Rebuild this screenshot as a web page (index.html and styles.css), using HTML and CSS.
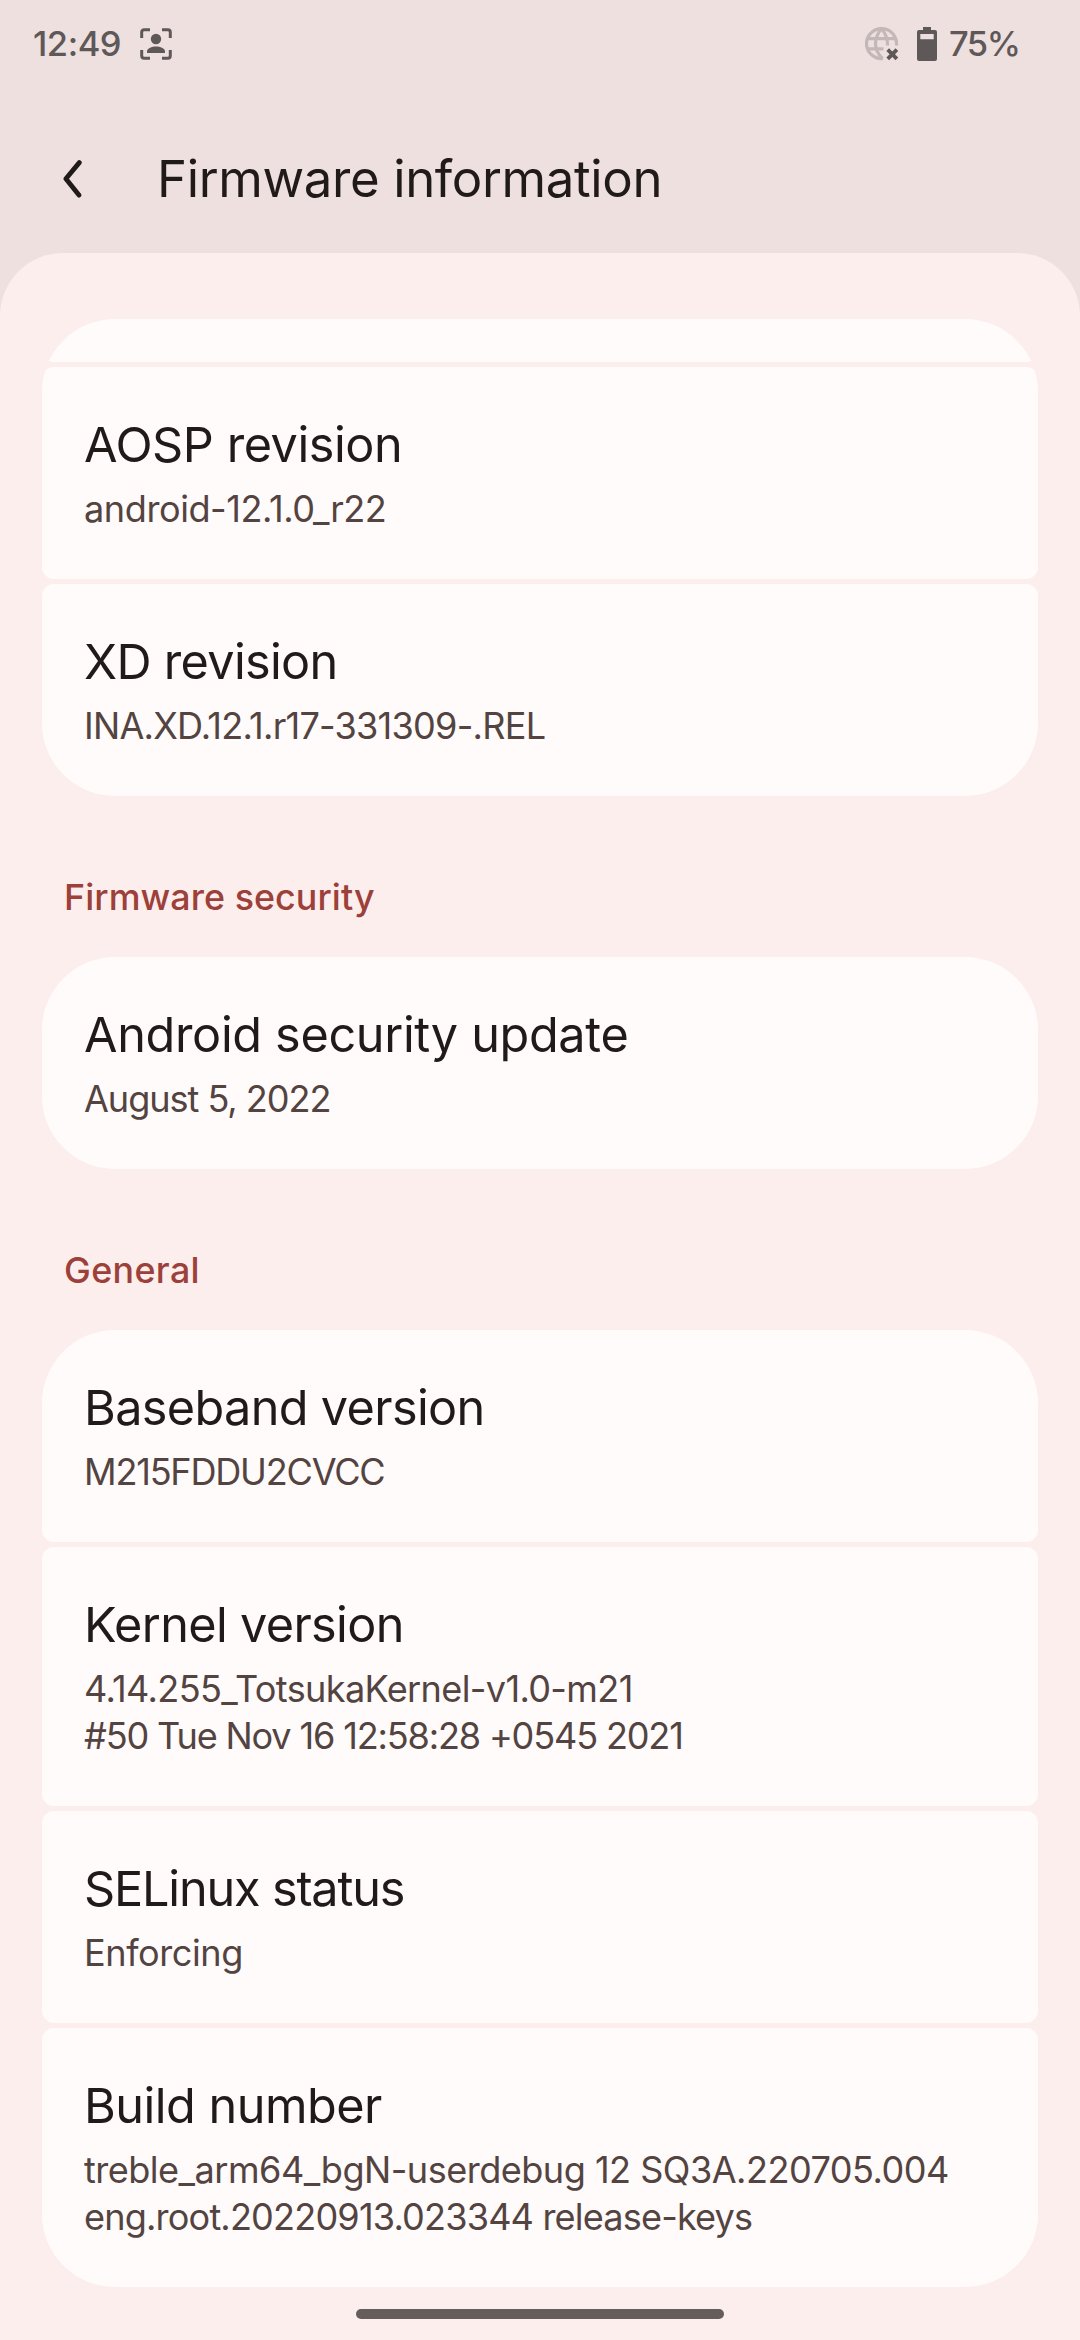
FILE: index.html
```html
<!DOCTYPE html>
<html lang="en">
<head>
<meta charset="utf-8">
<title>Firmware information</title>
<link rel="stylesheet" href="styles.css">
</head>
<body>
<div class="screen">
  <header class="status-bar">
    <div class="status-left">
      <span class="clock">12:49</span>
      <svg class="icon-person" viewBox="0 0 32 32" width="32" height="32">
        <path d="M1.7 10V4.2a2.5 2.5 0 0 1 2.5-2.5H10M22 1.7h5.8a2.5 2.5 0 0 1 2.500 2.500V10M30.300 22v5.800a2.500 2.500 0 0 1-2.500 2.500H22M10 30.300H4.200a2.500 2.500 0 0 1-2.500-2.500V22" fill="none" stroke="currentColor" stroke-width="3"/>
        <circle cx="16" cy="11" r="5.200" fill="currentColor"/>
        <path d="M7 25v-1.500c0-3.300 5-5 9-5s9 1.700 9 5V25z" fill="currentColor"/>
      </svg>
    </div>
    <div class="status-right">
      <svg class="icon-globe" viewBox="0 0 34 34" width="34" height="34">
        <g class="globe-lines" fill="none" stroke-width="3.200">
          <path d="M18 31.500A15 15 0 1 1 31.400 18.500"/>
          <path d="M3 11.700h27.500M3 21.800h15.500"/>
          <path d="M16.500 1.500c-3.400 4.200-6 9.300-6 15s2.600 10.800 7 15M16.500 1.500c3.400 4.200 6 9.300 6 15v2"/>
        </g>
        <path d="M22.700 22.700l9.200 9.200M31.900 22.700l-9.200 9.200" fill="none" stroke="currentColor" stroke-width="3.800"/>
      </svg>
      <svg class="icon-battery" viewBox="0 0 20 34" width="20" height="34">
        <path fill="currentColor" fill-rule="evenodd" d="M6 0h8v3h4a2 2 0 0 1 2 2v27a2 2 0 0 1-2 2H2a2 2 0 0 1-2-2V5a2 2 0 0 1 2-2h4zM3.300 7v5.200h13.400V7z"/>
      </svg>
      <span class="battery-level">75%</span>
    </div>
  </header>

  <div class="app-bar">
    <svg class="icon-back" viewBox="0 0 20 38" width="20" height="38">
      <path d="M16.300 2.600L2.900 18.800l13 16.300" fill="none" stroke="currentColor" stroke-width="4.800" stroke-linecap="round" stroke-linejoin="round"/>
    </svg>
    <h1 class="app-title">Firmware information</h1>
  </div>

  <main class="sheet">
    <section class="group">
      <div class="card card-scrolled"></div>
      <div class="card">
        <h3 class="title">AOSP revision</h3>
        <p class="summary">android-12.1.0_r22</p>
      </div>
      <div class="card">
        <h3 class="title title-snug">XD revision</h3>
        <p class="summary summary-xd">INA.XD.12.1.r17-331309-.REL</p>
      </div>
    </section>

    <h2 class="section-label">Firmware security</h2>
    <section class="group">
      <div class="card">
        <h3 class="title title-security">Android security update</h3>
        <p class="summary summary-date">August 5, 2022</p>
      </div>
    </section>

    <h2 class="section-label section-general">General</h2>
    <section class="group">
      <div class="card">
        <h3 class="title title-version">Baseband version</h3>
        <p class="summary summary-baseband">M215FDDU2CVCC</p>
      </div>
      <div class="card">
        <h3 class="title title-version">Kernel version</h3>
        <p class="summary summary-kernel">4.14.255_TotsukaKernel-v1.0-m21</p>
        <p class="summary summary-kernel-date">#50 Tue Nov 16 12:58:28 +0545 2021</p>
      </div>
      <div class="card">
        <h3 class="title title-selinux">SELinux status</h3>
        <p class="summary">Enforcing</p>
      </div>
      <div class="card">
        <h3 class="title title-build">Build number</h3>
        <p class="summary summary-build">treble_arm64_bgN-userdebug 12 SQ3A.220705.004</p>
        <p class="summary summary-tags">eng.root.20220913.023344 release-keys</p>
      </div>
    </section>
    <div class="nav-handle"></div>
  </main>
</div>
</body>
</html>
```

FILE: styles.css
```css
* { box-sizing: border-box; margin: 0; padding: 0; }

body {
  background: #eee0df;
  color: #201a19;
  font-family: Inter, Roboto, sans-serif;
  font-weight: 400;
}

h1, h2, h3 { font-weight: 400; }
svg { display: block; flex: none; }

.screen {
  width: 1080px;
  height: 2340px;
  display: flex;
  flex-direction: column;
  overflow: hidden;
}

/* status bar */
.status-bar {
  height: 88px;
  flex: none;
  display: flex;
  align-items: center;
  justify-content: space-between;
  padding: 0 60px 0 33px;
  color: #5f5858;
  font-size: 34.5px;
  font-weight: 500;
  line-height: 44px;
}
.status-left, .status-right { display: flex; align-items: center; }
.clock { width: 107px; letter-spacing: -0.46px; }
.battery-level { width: 71px; margin-left: 12px; letter-spacing: -1.5px; }
.icon-battery { margin-left: 18px; }
.globe-lines { stroke: #c3b8b7; }

/* app bar */
.app-bar {
  height: 165px;
  flex: none;
  display: flex;
  align-items: center;
  padding: 17px 0 0 63px;
}
.app-title {
  margin-left: 74px;
  font-size: 50.9px;
  line-height: 64px;
  letter-spacing: -0.36px;
}

/* content sheet */
.sheet {
  flex: 1;
  display: flex;
  flex-direction: column;
  padding: 66px 42px 0;
  background: #fceeec;
  border-radius: 63px 63px 0 0;
}
.group {
  display: flex;
  flex-direction: column;
  gap: 5px;
  border-radius: 73px;
  overflow: hidden;
}
.card {
  padding: 49px 42px 46px;
  background: #fffbfa;
  border-radius: 12px;
}
.card-scrolled { height: 43px; padding: 0; }

.title {
  margin-bottom: 12px;
  font-size: 48.6px;
  line-height: 58px;
  letter-spacing: -0.45px;
  white-space: nowrap;
}
.title-snug { letter-spacing: -0.69px; }
.title-security { letter-spacing: -0.34px; }
.title-version { letter-spacing: -0.65px; }
.title-selinux { letter-spacing: -1.17px; }
.title-build { letter-spacing: -0.5px; }

.summary {
  color: #534341;
  font-size: 36.1px;
  line-height: 47px;
  letter-spacing: -0.43px;
  white-space: nowrap;
}
.summary-xd { letter-spacing: -0.74px; }
.summary-date { letter-spacing: -1.04px; }
.summary-baseband { letter-spacing: -1.21px; }
.summary-kernel { letter-spacing: -0.64px; }
.summary-kernel-date { letter-spacing: -1.16px; }
.summary-build { letter-spacing: -0.51px; }
.summary-tags { letter-spacing: -0.82px; }

.section-label {
  padding: 78px 22px 36px;
  color: #9c403a;
  font-size: 35.8px;
  font-weight: 500;
  line-height: 47px;
  letter-spacing: 0.08px;
}
.section-general { letter-spacing: 0.37px; }

.nav-handle {
  width: 368px;
  height: 10px;
  margin: 22px auto 0;
  border-radius: 5px;
  background: #655d5c;
}
```
